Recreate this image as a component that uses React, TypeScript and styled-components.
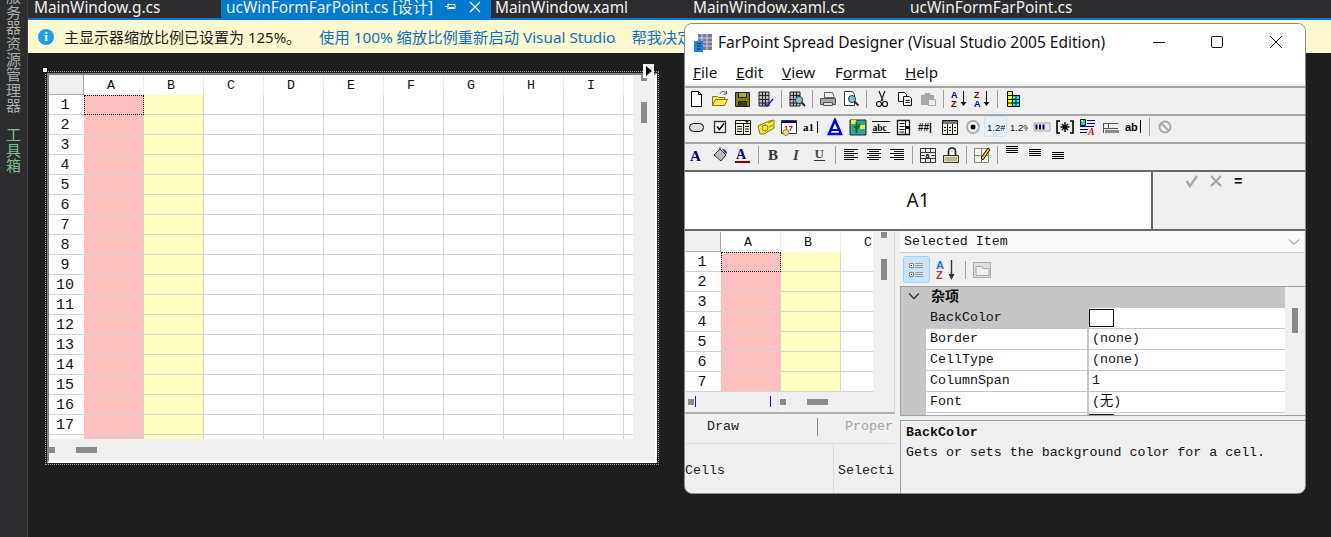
import React from 'react';
import styled, { createGlobalStyle } from 'styled-components';

const SIMSUN = `'Liberation Mono', 'Noto Sans CJK SC', monospace`;
const UI = `'Noto Sans', 'Noto Sans CJK SC', sans-serif`;

const GlobalStyle = createGlobalStyle`
  html, body {
    margin: 0;
    padding: 0;
    background: #1e1e1e;
  }
  * {
    box-sizing: border-box;
  }
`;

const SvgIcon = ({ children, size = 18 }: { children: React.ReactNode; size?: number }) => (
  <svg width={size} height={size} viewBox="0 0 18 18" fill="none">
    {children}
  </svg>
);

const serif = { fontFamily: "'Liberation Serif', serif", fontWeight: 700 };
const sans = { fontFamily: "'Liberation Sans', sans-serif", fontWeight: 700 };

const gridLines = (
  <path d="M2 2h10v14H2zM2 5.5h10M2 9.5h10M2 13h10M5.5 2v14M8.5 2v14" stroke="#222" fill="#bbb" />
);

const alignLines = (rows: [number, number][]) => (
  <path d={rows.map(([x, w], i) => `M${x} ${3.5 + i * 2}h${w}`).join('')} stroke="#111" />
);

const stackLines = (top: number) => (
  <path d={`M2 ${top + 0.5}h12M2 ${top + 2.5}h12M2 ${top + 4.5}h12M2 ${top + 6.5}h12`} stroke="#000" />
);

const icons: Record<string, React.ReactNode> = {
  new: <path d="M3.5 1.5h7l3 3v12h-10zM10.5 1.5v3h3" fill="#fff" stroke="#000" />,
  open: (
    <>
      <path d="M1.5 6.5h5l1 1h6v8h-12z" fill="#f5e36a" stroke="#808000" />
      <path d="M1.5 15.5l3-6h12l-3 6z" fill="#ffe95e" stroke="#808000" />
      <path d="M9 4c1-3 4-3 5.5-1.5M15.5 1v3h-3" stroke="#555" />
    </>
  ),
  save: (
    <>
      <path d="M1.5 2.5h14v14h-14z" fill="#808000" stroke="#222" />
      <path d="M4.5 2.5h8v5h-8z" fill="#a8a848" stroke="#222" />
      <path d="M4.5 11.5h8v5h-8z" fill="#404000" stroke="#222" />
    </>
  ),
  saveGrid: (
    <>
      {gridLines}
      <path d="M7 13l3 3 6-7" stroke="#1a1ac0" strokeWidth="1.5" />
    </>
  ),
  find: (
    <>
      {gridLines}
      <circle cx="11" cy="10" r="3.5" fill="#7fc7d8" stroke="#333" />
      <path d="M13.5 12.5l3.5 3.5" stroke="#222" strokeWidth="2" />
    </>
  ),
  print: (
    <>
      <path d="M5.5 2.5h8l2 5h-10z" fill="#eee" stroke="#666" />
      <path d="M1.5 8.5h15v6h-15z" fill="#aaa" stroke="#555" />
      <path d="M4.5 12.5h9v3h-9z" fill="#ddd" stroke="#555" />
    </>
  ),
  preview: (
    <>
      <path d="M2.5 1.5h8l2 3v11h-10z" fill="#fff" stroke="#333" />
      <circle cx="10" cy="9" r="3.5" fill="#7fc7d8" stroke="#333" />
      <path d="M12.5 11.5l4 4" stroke="#333" strokeWidth="2" />
    </>
  ),
  cut: (
    <>
      <path d="M6 1l4 10M12 1l-4 10" stroke="#222" strokeWidth="1.2" />
      <circle cx="6" cy="14" r="2.5" stroke="#111" strokeWidth="1.2" />
      <circle cx="12" cy="14" r="2.5" stroke="#111" strokeWidth="1.2" />
    </>
  ),
  copy: (
    <>
      <path d="M2.5 2.5h6l2 2v7h-8z" fill="#fff" stroke="#111" />
      <path d="M7.5 6.5h6l2 2v7h-8z" fill="#fff" stroke="#111" />
      <path d="M9.5 10.5h4M9.5 12.5h4" stroke="#111" />
    </>
  ),
  paste: (
    <>
      <path d="M2 5h3l1-2h5l1 2h3v10H2z" fill="#a8a8a8" />
      <path d="M9.5 9.5h7v6h-7z" fill="#eee" stroke="#aaa" />
    </>
  ),
  sortAZ: (
    <>
      <text x="1" y="8" fontSize="9" fill="#000080" style={sans}>A</text>
      <text x="1" y="17" fontSize="9" fill="#800000" style={sans}>Z</text>
      <path d="M13.5 1v13" stroke="#111" />
      <path d="M10.5 12h6l-3 4z" fill="#111" />
    </>
  ),
  sortZA: (
    <>
      <text x="1" y="8" fontSize="9" fill="#800000" style={sans}>Z</text>
      <text x="1" y="17" fontSize="9" fill="#000080" style={sans}>A</text>
      <path d="M13.5 1v13" stroke="#111" />
      <path d="M10.5 12h6l-3 4z" fill="#111" />
    </>
  ),
  colorGrid: (
    <>
      <path d="M3 1h6v16H3z" fill="#ff0" />
      <path d="M9 5h7v12H9z" fill="#0ff" />
      <path d="M3.5 1.5h5v15h-5zM8.5 5.5h7v11h-7zM3.5 5.5h12M3.5 9.5h12M3.5 13h12M12 5.5v11" stroke="#000" />
    </>
  ),
  oval: <rect x="1.5" y="5.5" width="14" height="8" rx="4" fill="#ddd" stroke="#000" />,
  check: (
    <>
      <path d="M2 2h14v14H2z" fill="#fff" />
      <path d="M3.5 3.5h11v11h-11z" stroke="#333" strokeWidth="1.4" />
      <path d="M6 8.5l2.5 3L13 5.5" stroke="#000" strokeWidth="1.6" />
    </>
  ),
  combo: (
    <>
      <path d="M1.5 2.5h15v14h-15z" fill="#f2f2e0" stroke="#111" />
      <path d="M1.5 5.5h15M9.5 5.5v11M3 8.5h5M3 11h5M3 13.5h5M11 8.5h4M11 11h4M11 13.5h4" stroke="#111" />
      <path d="M11 3h4l-2 2z" fill="#111" />
    </>
  ),
  coins: (
    <>
      <path d="M1 8l11-5 5-1v8l-10 6H3z" fill="#ffe94a" stroke="#808000" />
      <circle cx="8" cy="10" r="3" stroke="#808000" />
      <path d="M11 5l4-2M12 9l4-2" stroke="#808000" />
    </>
  ),
  calendar: (
    <>
      <path d="M1.5 2.5h15v13h-15z" fill="#fff" stroke="#333" />
      <path d="M2 3h14v2H2z" fill="#000080" />
      <text x="4" y="13" fontSize="8" fill="#c00000" style={sans}>17</text>
      <circle cx="6" cy="14.5" r="3" fill="#e8d48a" stroke="#a08a40" />
    </>
  ),
  a1: (
    <>
      <text x="0" y="13" fontSize="11" fill="#000" style={serif}>a1</text>
      <path d="M14.5 3v12" stroke="#000" />
    </>
  ),
  blueA: (
    <>
      <path d="M9 2l6 14H3z" stroke="#0000e0" strokeWidth="2.6" fill="#fff" />
      <path d="M5 12h8" stroke="#0000e0" strokeWidth="2" />
    </>
  ),
  image: (
    <>
      <path d="M1 2h16v15H1z" fill="#2ea89a" stroke="#222" />
      <path d="M2 2h5v4H2zM11 7h5v4h-5z" fill="#e8e84a" />
      <path d="M7.5 4v11M5 8l3 3 3-5" stroke="#126a1a" strokeWidth="1.8" />
    </>
  ),
  abc: (
    <>
      <path d="M0 3.5h18M0 14.5h18" stroke="#111" />
      <text x="0.5" y="12.5" fontSize="9.5" fill="#000" style={serif}>abc</text>
    </>
  ),
  listDoc: (
    <>
      <path d="M2.5 2.5h12v14h-12z" fill="#fff" stroke="#111" strokeWidth="1.3" />
      <path d="M4.5 5.5h5M4.5 8.5h5M4.5 11.5h5M4.5 14h5M10.5 3v13" stroke="#111" />
      <path d="M11 8h3v3h-3z" fill="#111" />
    </>
  ),
  hashes: (
    <text x="0" y="13" fontSize="10" fill="#000" style={sans}>
      ##|
    </text>
  ),
  table: (
    <>
      <path d="M1.5 2.5h15v14h-15z" fill="#f2f2e0" stroke="#111" />
      <path d="M2 3h14v3H2z" fill="#777" />
      <path d="M6.5 6v10M11.5 6v10M3 9.5h2M8 9.5h2M13 9.5h2M3 12.5h2M8 12.5h2M13 12.5h2" stroke="#111" />
    </>
  ),
  radio: (
    <>
      <circle cx="9" cy="9" r="6" fill="#fff" stroke="#aaa" strokeWidth="2" />
      <circle cx="9" cy="9" r="2.5" fill="#000" />
    </>
  ),
  num: (
    <text x="0" y="13" fontSize="9.5" fill="#111" style={{ fontFamily: "'Liberation Sans', sans-serif" }}>
      1.2#
    </text>
  ),
  pct: (
    <text x="0" y="13" fontSize="9.5" fill="#111" style={{ fontFamily: "'Liberation Sans', sans-serif" }}>
      1.2%
    </text>
  ),
  bar: (
    <>
      <path d="M1 5h16v8H1z" fill="#e8e8d8" stroke="#aaa" />
      <path d="M2.5 6.5h2v5h-2zM6 6.5h2v5H6zM9.5 6.5h2v5h-2z" fill="#000080" />
    </>
  ),
  bracket: (
    <>
      <path d="M4 3H1v12h3M14 3h3v12h-3" stroke="#000" strokeWidth="1.6" />
      <path d="M9 4v10M4.5 9h9M6 6l6 6M12 6l-6 6" stroke="#000" strokeWidth="1.4" />
    </>
  ),
  rich: (
    <>
      <path d="M1.5 1.5h5v6h-5z" fill="#00d0e0" stroke="#111" />
      <path d="M2 2h2v2H2z" fill="#ff0" />
      <path d="M8 2.5h8M8 5.5h8M1 8.5h14M1 11.5h8M1 14.5h7" stroke="#000090" />
      <text x="9" y="17" fontSize="10" fill="#e00000" style={{ ...serif, fontStyle: 'italic' }}>A</text>
    </>
  ),
  ruler: (
    <>
      <path d="M1.5 5.5h15M1.5 5v10M6.5 5v5M1 10.5h15" stroke="#555" />
      <path d="M4 12v3M6 12v3M8 12v3M10 12v3M12 12v3M14 12v3M16 12v3" stroke="#222" />
    </>
  ),
  abBar: (
    <>
      <text x="0" y="13" fontSize="11" fill="#000" style={sans}>ab</text>
      <path d="M15.5 2v13" stroke="#000" />
    </>
  ),
  noSign: (
    <>
      <circle cx="9" cy="9" r="5.5" stroke="#a8a8a8" strokeWidth="2" />
      <path d="M5 5l8 8" stroke="#a8a8a8" strokeWidth="2" />
    </>
  ),
  serifA: <text x="2" y="15" fontSize="15" fill="#000080" style={serif}>A</text>,
  bucket: (
    <>
      <path d="M3 9l6-6 6 6-5 6z" fill="#bbb" stroke="#333" />
      <path d="M9 3V1" stroke="#333" />
      <path d="M11 3c3 0 5 2 5 5l-2-1z" fill="#1a3a90" />
    </>
  ),
  underA: (
    <>
      <text x="2" y="13" fontSize="14" fill="#000080" style={serif}>A</text>
      <path d="M1 15h15v2H1z" fill="#800000" />
    </>
  ),
  bold: <text x="3" y="14" fontSize="15" fill="#333" style={serif}>B</text>,
  italic: <text x="5" y="14" fontSize="15" fill="#444" style={{ ...serif, fontStyle: 'italic' }}>I</text>,
  underline: (
    <>
      <text x="3.5" y="12" fontSize="13" fill="#444" style={serif}>U</text>
      <path d="M3 14.5h11" stroke="#333" />
    </>
  ),
  left: alignLines([[2, 14], [2, 10], [2, 14], [2, 10], [2, 14], [2, 10]]),
  center: alignLines([[2, 14], [4, 10], [2, 14], [4, 10], [2, 14], [4, 10]]),
  right: alignLines([[2, 14], [6, 10], [2, 14], [6, 10], [2, 14], [6, 10]]),
  merge: (
    <>
      <path d="M1.5 2.5h15v14h-15zM1.5 6.5h15M1.5 12.5h15M6.5 2.5v4M11.5 2.5v4M6.5 12.5v4M11.5 12.5v4" fill="#f2f2f2" stroke="#333" />
      <text x="6.5" y="11.5" fontSize="7" fill="#000" style={sans}>a</text>
      <path d="M2.5 9.5h3M12.5 9.5h3" stroke="#000" />
    </>
  ),
  lock: (
    <>
      <path d="M1.5 9.5h15v7h-15z" fill="#e8e0a8" stroke="#333" />
      <path d="M6.5 9V5c0-4 7-4 7 0v4" stroke="#222" strokeWidth="1.6" />
      <path d="M3 12h12M3 14h12" stroke="#888" />
    </>
  ),
  note: (
    <>
      <path d="M1.5 2.5h14v14h-14z" fill="#f6f6ea" stroke="#8a8a70" />
      <path d="M1.5 9.5h14M8.5 2.5v14" stroke="#8a8a70" />
      <path d="M8 12l7-10 2 1.5L10 14z" fill="#f0c020" stroke="#111" />
    </>
  ),
  vTop: stackLines(0),
  vMid: stackLines(3),
  vBot: stackLines(6),
};

const toolRows: string[][] = [
  ['new', 'open', 'save', 'saveGrid', '|', 'find', '|', 'print', 'preview', '|', 'cut', 'copy', 'paste', '|', 'sortAZ', 'sortZA', '|', 'colorGrid'],
  ['oval', 'check', 'combo', 'coins', 'calendar', 'a1', 'blueA', 'image', 'abc', 'listDoc', 'hashes', 'table', 'radio', 'num', 'pct', 'bar', 'bracket', 'rich', 'ruler', 'abBar', '|', 'noSign'],
  ['serifA', 'bucket', 'underA', '|', 'bold', 'italic', 'underline', '|', 'left', 'center', 'right', '|', 'merge', 'lock', '|', 'note', '|', 'vTop', 'vMid', 'vBot'],
];

type Tone = 'plain' | 'pink' | 'yellow';

const Spreadsheet = ({
  columns,
  rows,
  headerWidth,
}: {
  columns: string[];
  rows: number;
  headerWidth: number;
}) => (
  <SheetGrid $headerWidth={headerWidth} $columns={columns.length}>
    <CornerCell />
    {columns.map((name) => (
      <ColumnHead key={name}>{name}</ColumnHead>
    ))}
    {Array.from({ length: rows }).map((_, row) => (
      <React.Fragment key={row}>
        <RowHead>{row + 1}</RowHead>
        {columns.map((name, col) => {
          const tone: Tone = col === 0 ? 'pink' : col === 1 ? 'yellow' : 'plain';
          return <DataCell key={name} $tone={tone} $active={row === 0 && col === 0} />;
        })}
      </React.Fragment>
    ))}
  </SheetGrid>
);

const tabs = [
  { label: 'MainWindow.g.cs', width: 193, pad: 6 },
  { label: 'ucWinFormFarPoint.cs [设计]', width: 270, pad: 5, active: true },
  { label: 'MainWindow.xaml', width: 198, pad: 4 },
  { label: 'MainWindow.xaml.cs', width: 217, pad: 4 },
  { label: 'ucWinFormFarPoint.cs', width: 200, pad: 4 },
];

const properties = [
  { name: 'BackColor', swatch: true, selected: true },
  { name: 'Border', value: '(none)' },
  { name: 'CellType', value: '(none)' },
  { name: 'ColumnSpan', value: '1' },
  { name: 'Font', value: '(无)' },
  { name: '', swatch: true },
];

const App = () => (
  <Page>
    <GlobalStyle />
    <SideRail>
      <RailLabel>服务器资源管理器</RailLabel>
      <RailLabel $green>工具箱</RailLabel>
    </SideRail>
    <Workspace>
      <TabBar>
        {tabs.map((tab) => (
          <Tab key={tab.label} $width={tab.width} $pad={tab.pad} $active={tab.active}>
            {tab.label}
            {tab.active && (
              <TabIcons>
                <svg width="12" height="12" viewBox="0 0 12 12" fill="none">
                  <path d="M3 2.5v6M3 3.5h7v4H3M0 5.5h3M4 6.5h5" stroke="#fff" />
                </svg>
                <svg width="12" height="12" viewBox="0 0 12 12" fill="none">
                  <path d="M1 1l10 10M11 1L1 11" stroke="#fff" strokeWidth="1.3" />
                </svg>
              </TabIcons>
            )}
          </Tab>
        ))}
      </TabBar>
      <InfoBar>
        <InfoDot>i</InfoDot>
        <InfoText>主显示器缩放比例已设置为 125%。</InfoText>
        <InfoLink>使用 100% 缩放比例重新启动 Visual Studio</InfoLink>
        <InfoLink>帮我决定</InfoLink>
      </InfoBar>
      <DesignSurface>
        <SelectionFrame>
          <GripHandle />
          <SmartTag>
            <svg width="6" height="10" viewBox="0 0 6 10">
              <path d="M0 0l6 5-6 5z" fill="#000" />
            </svg>
          </SmartTag>
          <SheetShell>
            <SheetRow>
              <SheetClip $width={584} $height={364}>
                <Spreadsheet columns={['A', 'B', 'C', 'D', 'E', 'F', 'G', 'H', 'I', 'J']} rows={18} headerWidth={35} />
              </SheetClip>
              <VScroll $width={22}>
                <ScrollNub />
                <VThumb />
              </VScroll>
            </SheetRow>
            <HScroll>
              <HNub />
              <HThumb />
            </HScroll>
          </SheetShell>
        </SelectionFrame>
      </DesignSurface>
    </Workspace>

    <DesignerWindow>
      <TitleBar>
        <AppIcon>
          <svg width="18" height="18" viewBox="0 0 18 18" fill="none">
            <path d="M4 0h14v16H4z" fill="#7a7a9a" />
            <path d="M4 4h14M4 8h14M4 12h14M8 0v16M13 0v16" stroke="#d0d0e0" />
            <path d="M0 7h9v11H0z" fill="#1f86d8" />
            <path d="M3 9.5h4M3 12h4M3 15h4" stroke="#0a2a60" />
          </svg>
        </AppIcon>
        <TitleText>FarPoint Spread Designer (Visual Studio 2005 Edition)</TitleText>
        <WindowControls>
          <WindowButton>
            <svg width="14" height="14" viewBox="0 0 14 14" fill="none">
              <path d="M1 7.5h12" stroke="#111" />
            </svg>
          </WindowButton>
          <WindowButton>
            <svg width="14" height="14" viewBox="0 0 14 14" fill="none">
              <rect x="1.5" y="1.5" width="11" height="11" rx="1.5" stroke="#111" />
            </svg>
          </WindowButton>
          <WindowButton>
            <svg width="14" height="14" viewBox="0 0 14 14" fill="none">
              <path d="M1 1l12 12M13 1L1 13" stroke="#111" />
            </svg>
          </WindowButton>
        </WindowControls>
      </TitleBar>
      <MenuBar>
        <MenuItem $width={43}><u>F</u>ile</MenuItem>
        <MenuItem $width={46}><u>E</u>dit</MenuItem>
        <MenuItem $width={53}><u>V</u>iew</MenuItem>
        <MenuItem $width={70}>F<u>o</u>rmat</MenuItem>
        <MenuItem $width={50}><u>H</u>elp</MenuItem>
      </MenuBar>
      {toolRows.map((row, i) => (
        <ToolRow key={i}>
          {row.map((name, j) =>
            name === '|' ? (
              <ToolSep key={j} />
            ) : (
              <ToolCell key={j} $hot={name === 'num'}>
                <SvgIcon>{icons[name]}</SvgIcon>
              </ToolCell>
            ),
          )}
        </ToolRow>
      ))}
      <FormulaBar>
        <CellName>A1</CellName>
        <FormulaTools>
          <svg width="14" height="14" viewBox="0 0 14 14" fill="none">
            <path d="M1.5 7l3.5 5 7-10" stroke="#a8a8a8" strokeWidth="2.4" />
          </svg>
          <svg width="14" height="14" viewBox="0 0 14 14" fill="none">
            <path d="M2 2l10 10M12 2L2 12" stroke="#a8a8a8" strokeWidth="2.4" />
          </svg>
          <EqualsMark>=</EqualsMark>
        </FormulaTools>
      </FormulaBar>
      <LowerArea>
        <LeftColumn>
          <MiniSheetBox>
            <SheetRow>
              <SheetClip $width={187} $height={160}>
                <Spreadsheet columns={['A', 'B', 'C']} rows={7} headerWidth={35} />
              </SheetClip>
              <VScroll $width={21}>
                <ScrollNub />
                <VThumb />
              </VScroll>
            </SheetRow>
            <MiniHScroll>
              <MiniSegment $width={91}>
                <HNub />
                <SplitTick $left={9} />
                <SplitTick $left={84} />
              </MiniSegment>
              <MiniSegment $width={116}>
                <HNub />
                <HThumb />
              </MiniSegment>
            </MiniHScroll>
          </MiniSheetBox>
          <TabStrip>
            <DrawTab>Draw</DrawTab>
            <PropTab>Proper</PropTab>
          </TabStrip>
          <CellsStrip>
            <CellsLabel $width={148}>Cells</CellsLabel>
            <CellsLabel $width={61} $divided>Selection</CellsLabel>
          </CellsStrip>
        </LeftColumn>
        <RightColumn>
          <ComboRow>
            Selected Item
            <svg width="12" height="8" viewBox="0 0 12 8" fill="none">
              <path d="M1 1.5l5 5 5-5" stroke="#777" />
            </svg>
          </ComboRow>
          <PropToolbar>
            <PropButton $hot>
              <svg width="20" height="20" viewBox="0 0 20 20" fill="none">
                <path d="M2.5 3.5h4v4h-4zM2.5 12.5h4v4h-4z" fill="#fff" stroke="#888" />
                <path d="M4 5h1v1H4zM4 14h1v1H4z" fill="#000" />
                <path d="M8 3.5h8M8 5.5h8M8 7.5h8M8 12.5h8M8 14.5h8M8 16.5h8" stroke="#999" />
              </svg>
            </PropButton>
            <PropButton>
              <svg width="24" height="24" viewBox="0 0 24 24" fill="none">
                <text x="2" y="11" fontSize="11" fill="#2a6cd0" style={sans}>A</text>
                <text x="2" y="21" fontSize="11" fill="#a04040" style={sans}>Z</text>
                <path d="M17.5 2v16" stroke="#333" strokeWidth="1.4" />
                <path d="M14.5 16h6l-3 6z" fill="#333" />
              </svg>
            </PropButton>
            <ToolSep />
            <PropButton $narrow>
              <svg width="20" height="20" viewBox="0 0 20 20" fill="none">
                <path d="M1.5 2.5h17v15h-17z" fill="#ddd" stroke="#aaa" />
                <path d="M4 6.5h6l1 2h6v7H4z" fill="#eee" stroke="#aaa" />
              </svg>
            </PropButton>
          </PropToolbar>
          <PropPanel>
            <PropList>
              <CategoryRow>
                <svg width="12" height="8" viewBox="0 0 12 8" fill="none">
                  <path d="M1 1.5l5 5 5-5" stroke="#333" strokeWidth="1.4" />
                </svg>
                <b>杂项</b>
              </CategoryRow>
              {properties.map((prop) => (
                <PropRow key={prop.name}>
                  <PropName $selected={prop.selected}>{prop.name}</PropName>
                  <PropValue>{prop.swatch ? <ColorSwatch /> : prop.value}</PropValue>
                </PropRow>
              ))}
            </PropList>
            <PropScroll>
              <PropThumb />
            </PropScroll>
          </PropPanel>
          <HelpBox>
            <HelpTitle>BackColor</HelpTitle>
            <HelpText>Gets or sets the background color for a cell.</HelpText>
          </HelpBox>
        </RightColumn>
      </LowerArea>
    </DesignerWindow>
  </Page>
);

const Page = styled.div`
  position: relative;
  display: flex;
  width: 1331px;
  height: 537px;
  overflow: hidden;
  background: #1e1e1e;
`;

const SideRail = styled.div`
  flex: none;
  width: 28px;
  height: 100%;
  display: flex;
  flex-direction: column;
  align-items: center;
  gap: 13px;
  padding-right: 1px;
  background: #2d2d30;
  border-right: 1px solid #3f3f46;
  overflow: hidden;
`;

const RailLabel = styled.div<{ $green?: boolean }>`
  writing-mode: vertical-rl;
  font: 15px/16px 'Noto Sans CJK SC', sans-serif;
  letter-spacing: 0.6px;
  color: ${(p) => (p.$green ? '#7fbf8f' : '#a6aca6')};
  margin-top: ${(p) => (p.$green ? '0' : '-11px')};
`;

const Workspace = styled.div`
  flex: 1;
  min-width: 0;
  display: flex;
  flex-direction: column;
`;

const TabBar = styled.div`
  flex: none;
  display: flex;
  height: 20px;
  background: #2d2d30;
  border-bottom: 2px solid #007acc;
`;

const Tab = styled.div<{ $width: number; $pad: number; $active?: boolean }>`
  flex: none;
  position: relative;
  width: ${(p) => p.$width}px;
  padding-left: ${(p) => p.$pad}px;
  background: ${(p) => (p.$active ? '#007acc' : 'transparent')};
  color: #f1f1f1;
  font: 15.4px/15px ${UI};
  white-space: nowrap;
`;

const TabIcons = styled.span`
  position: absolute;
  top: 1px;
  left: 224px;
  display: flex;
  gap: 12px;
`;

const InfoBar = styled.div`
  flex: none;
  display: flex;
  align-items: center;
  height: 33px;
  padding-left: 10px;
  background: #fcf8cf;
  font: 15.3px/20px ${UI};
  white-space: nowrap;
`;

const InfoDot = styled.span`
  flex: none;
  width: 16px;
  height: 16px;
  margin-right: 10px;
  border-radius: 50%;
  background: #1ba1e2;
  color: #fff;
  font: bold 13px/16px 'Liberation Serif', serif;
  text-align: center;
`;

const InfoText = styled.span`
  color: #1e1e1e;
  font-size: 15px;
  margin-right: 18px;
`;

const InfoLink = styled.span`
  color: #0e70c0;
  margin-right: 16px;
`;

const DesignSurface = styled.div`
  flex: 1;
  padding: 18px 0 0 17px;
`;

const SelectionFrame = styled.div`
  position: relative;
  width: 614px;
  height: 394px;
  padding: 1px;
  border: 1px dotted #a0a0a0;
`;

const GripHandle = styled.span`
  position: absolute;
  top: -5px;
  left: -4px;
  width: 6px;
  height: 6px;
  background: #fff;
  border: 1px solid #111;
`;

const SmartTag = styled.span`
  position: absolute;
  top: -8px;
  right: 4px;
  display: flex;
  align-items: center;
  justify-content: center;
  width: 11px;
  height: 14px;
  background: #f4f4f4;
`;

const SheetShell = styled.div`
  display: flex;
  flex-direction: column;
  width: 610px;
  height: 390px;
  background: #f0f0f0;
  border-top: 2px solid #808080;
  border-left: 2px solid #808080;
  border-right: 2px solid #fff;
  border-bottom: 2px solid #fff;
`;

const SheetRow = styled.div`
  display: flex;
`;

const SheetClip = styled.div<{ $width: number; $height: number }>`
  flex: none;
  width: ${(p) => p.$width}px;
  height: ${(p) => p.$height}px;
  overflow: hidden;
  background: #fff;
`;

const SheetGrid = styled.div<{ $headerWidth: number; $columns: number }>`
  display: grid;
  grid-template-columns: ${(p) => p.$headerWidth}px repeat(${(p) => p.$columns}, 60px);
  grid-auto-rows: 20px;
  font: 13.3px/20px ${SIMSUN};
  color: #111;
`;

const CornerCell = styled.div`
  background: #f0f0f0;
  border-right: 1px solid #a8a8a8;
  border-bottom: 1px solid #a8a8a8;
`;

const ColumnHead = styled.div`
  padding: 1px 5px 0 0;
  text-align: center;
  background: #fff;
  border-right: 1px solid #ececec;
`;

const RowHead = styled.div`
  padding: 1px 3px 0 0;
  text-align: center;
  font-size: 15px;
  background: #fff;
  border-bottom: 1px solid #d3d3d3;
`;

const toneColors: Record<Tone, string> = {
  plain: '#ffffff',
  pink: '#ffbfbf',
  yellow: '#ffffc0',
};

const DataCell = styled.div<{ $tone: Tone; $active: boolean }>`
  background: ${(p) => toneColors[p.$tone]};
  border-right: 1px solid #d3d3d3;
  border-bottom: 1px solid #d3d3d3;
  ${(p) => p.$active && 'border: 1px dotted #000;'}
`;

const VScroll = styled.div<{ $width: number }>`
  flex: none;
  width: ${(p) => p.$width}px;
  display: flex;
  flex-direction: column;
  align-items: center;
  background: #f0f0f0;
`;

const ScrollNub = styled.span`
  width: 6px;
  height: 6px;
  background: #8a8a8a;
`;

const VThumb = styled.span`
  width: 6px;
  height: 21px;
  margin-top: 21px;
  background: #8a8a8a;
`;

const HScroll = styled.div`
  flex: 1;
  display: flex;
  align-items: center;
`;

const HNub = styled.span`
  flex: none;
  width: 6px;
  height: 6px;
  background: #8a8a8a;
`;

const HThumb = styled.span`
  flex: none;
  width: 21px;
  height: 6px;
  margin-left: 21px;
  background: #8a8a8a;
`;

const DesignerWindow = styled.div`
  position: absolute;
  top: 23px;
  left: 684px;
  width: 622px;
  height: 471px;
  display: flex;
  flex-direction: column;
  overflow: hidden;
  background: #f0f0f0;
  border: 1px solid #8c8c8c;
  border-radius: 8px;
`;

const TitleBar = styled.div`
  flex: none;
  display: flex;
  align-items: center;
  height: 38px;
  padding: 0 0 3px 9px;
  background: #fff;
`;

const AppIcon = styled.span`
  display: flex;
  margin: 3px 6px 0 0;
`;

const TitleText = styled.span`
  flex: 1;
  color: #111;
  font: 15.5px/20px ${UI};
  white-space: nowrap;
`;

const WindowControls = styled.div`
  display: flex;
`;

const WindowButton = styled.span`
  display: flex;
  align-items: center;
  justify-content: center;
  width: 58.5px;
  height: 35px;
`;

const MenuBar = styled.div`
  flex: none;
  display: flex;
  height: 22px;
  padding-left: 8px;
  background: #fff;
  margin-bottom: 2px;
`;

const MenuItem = styled.span<{ $width: number }>`
  width: ${(p) => p.$width}px;
  color: #111;
  font: 15.2px/20px ${UI};
`;

const ToolRow = styled.div`
  flex: none;
  display: flex;
  align-items: center;
  height: 28px;
  padding-bottom: 5px;
  border-top: 2px solid #a4a4a4;
`;

const ToolCell = styled.span<{ $hot?: boolean }>`
  flex: none;
  display: flex;
  align-items: center;
  justify-content: center;
  width: 23px;
  height: 21px;
  ${(p) => p.$hot && 'background: #e6f1fa; border: 1px solid #cfe3f5; border-radius: 2px;'}
`;

const ToolSep = styled.span`
  flex: none;
  width: 1px;
  height: 18px;
  margin: 0 3.5px;
  background: #a0a0a0;
`;

const FormulaBar = styled.div`
  flex: none;
  display: flex;
  height: 61px;
  border-top: 2px solid #696969;
  border-bottom: 2px solid #696969;
`;

const CellName = styled.div`
  flex: none;
  width: 468px;
  background: #fff;
  border-right: 2px solid #696969;
  color: #111;
  font: 19px/57px ${UI};
  text-align: center;
`;

const FormulaTools = styled.div`
  flex: 1;
  display: flex;
  align-items: flex-start;
  gap: 10px;
  padding: 2px 0 0 32px;
`;

const EqualsMark = styled.span`
  margin-left: 1px;
  color: #000;
  font: bold 14px/16px ${SIMSUN};
`;

const LowerArea = styled.div`
  flex: 1;
  min-height: 0;
  display: flex;
`;

const LeftColumn = styled.div`
  flex: none;
  width: 215px;
  display: flex;
  flex-direction: column;
`;

const MiniSheetBox = styled.div`
  flex: none;
  width: 210px;
  height: 183px;
  padding: 1px 0 0 1px;
  border-right: 1px solid #d8d8d8;
  border-bottom: 2px solid #b0b0b0;
`;

const MiniHScroll = styled.div`
  display: flex;
  height: 20px;
`;

const MiniSegment = styled.div<{ $width: number }>`
  position: relative;
  width: ${(p) => p.$width}px;
  display: flex;
  align-items: center;
  padding-left: 2px;
  & + & {
    border-left: 1px solid #e0e0e0;
  }
`;

const SplitTick = styled.span<{ $left: number }>`
  position: absolute;
  top: 4px;
  left: ${(p) => p.$left}px;
  width: 1px;
  height: 11px;
  background: #1010e0;
`;

const TabStrip = styled.div`
  flex: none;
  display: flex;
  align-items: center;
  width: 210px;
  height: 30px;
  padding-bottom: 3px;
  font: 13.3px/18px ${SIMSUN};
  overflow: hidden;
  border-bottom: 1px solid #dcdcdc;
`;

const DrawTab = styled.span`
  width: 133px;
  padding-left: 22px;
  color: #222;
  border-right: 1px solid #888;
`;

const PropTab = styled.span`
  padding-left: 27px;
  color: #a0a0a0;
`;

const CellsStrip = styled.div`
  flex: 1;
  display: flex;
  width: 210px;
  font: 13.3px/54px ${SIMSUN};
  color: #222;
`;

const CellsLabel = styled.span<{ $width: number; $divided?: boolean }>`
  width: ${(p) => p.$width}px;
  overflow: hidden;
  white-space: nowrap;
  padding-left: ${(p) => (p.$divided ? '4px' : '0')};
  ${(p) => p.$divided && 'border-left: 1px solid #dcdcdc;'}
`;

const RightColumn = styled.div`
  flex: 1;
  min-width: 0;
  display: flex;
  flex-direction: column;
  font: 13.3px/20px ${SIMSUN};
  color: #111;
`;

const ComboRow = styled.div`
  flex: none;
  display: flex;
  align-items: center;
  justify-content: space-between;
  height: 22px;
  padding: 0 4px;
  background: #fafafa;
  border-bottom: 1px solid #c8c8c8;
  margin-right: 1px;
`;

const PropToolbar = styled.div`
  flex: none;
  display: flex;
  align-items: center;
  gap: 2px;
  height: 33px;
  padding-left: 3px;
`;

const PropButton = styled.span<{ $hot?: boolean; $narrow?: boolean }>`
  display: flex;
  align-items: center;
  justify-content: center;
  width: ${(p) => (p.$narrow ? 22 : 27)}px;
  height: 27px;
  ${(p) => p.$hot && 'background: #cce4f7; border: 1px solid #99d1ff; border-radius: 3px;'}
`;

const PropPanel = styled.div`
  flex: none;
  display: flex;
  height: 130px;
  border-top: 1px solid #a0a0a0;
  border-left: 1px solid #a0a0a0;
  border-bottom: 1px solid #a0a0a0;
`;

const PropList = styled.div`
  flex: none;
  width: 384px;
  overflow: hidden;
  background: #c6c6c6;
`;

const CategoryRow = styled.div`
  display: flex;
  align-items: center;
  gap: 11px;
  height: 21px;
  padding: 0 0 4px 7px;
  font: 14px/17px 'Noto Sans CJK SC', sans-serif;
`;

const PropRow = styled.div`
  display: grid;
  grid-template-columns: 161px 1fr;
  height: 21px;
  margin-left: 25px;
  background: #fff;
  border-bottom: 1px solid #c8c8c8;
`;

const PropName = styled.div<{ $selected?: boolean }>`
  padding-left: 4px;
  background: ${(p) => (p.$selected ? '#c6c6c6' : '#fff')};
`;

const PropValue = styled.div`
  border-left: 2px solid #c8c8c8;
  line-height: 20px;
  text-indent: 3px;
`;

const ColorSwatch = styled.div`
  width: 25px;
  height: 18px;
  margin-top: 1px;
  background: #fff;
  border: 1px solid #111;
`;

const PropScroll = styled.div`
  flex: 1;
  padding: 21px 0 0 7px;
`;

const PropThumb = styled.div`
  width: 6px;
  height: 25px;
  background: #8a8a8a;
`;

const HelpBox = styled.div`
  flex: 1;
  margin-top: 4px;
  padding: 2px 5px;
  border-top: 1px solid #a0a0a0;
  border-left: 1px solid #a0a0a0;
`;

const HelpTitle = styled.div`
  font-weight: 700;
`;

const HelpText = styled.div`
  white-space: nowrap;
`;

export default App;
